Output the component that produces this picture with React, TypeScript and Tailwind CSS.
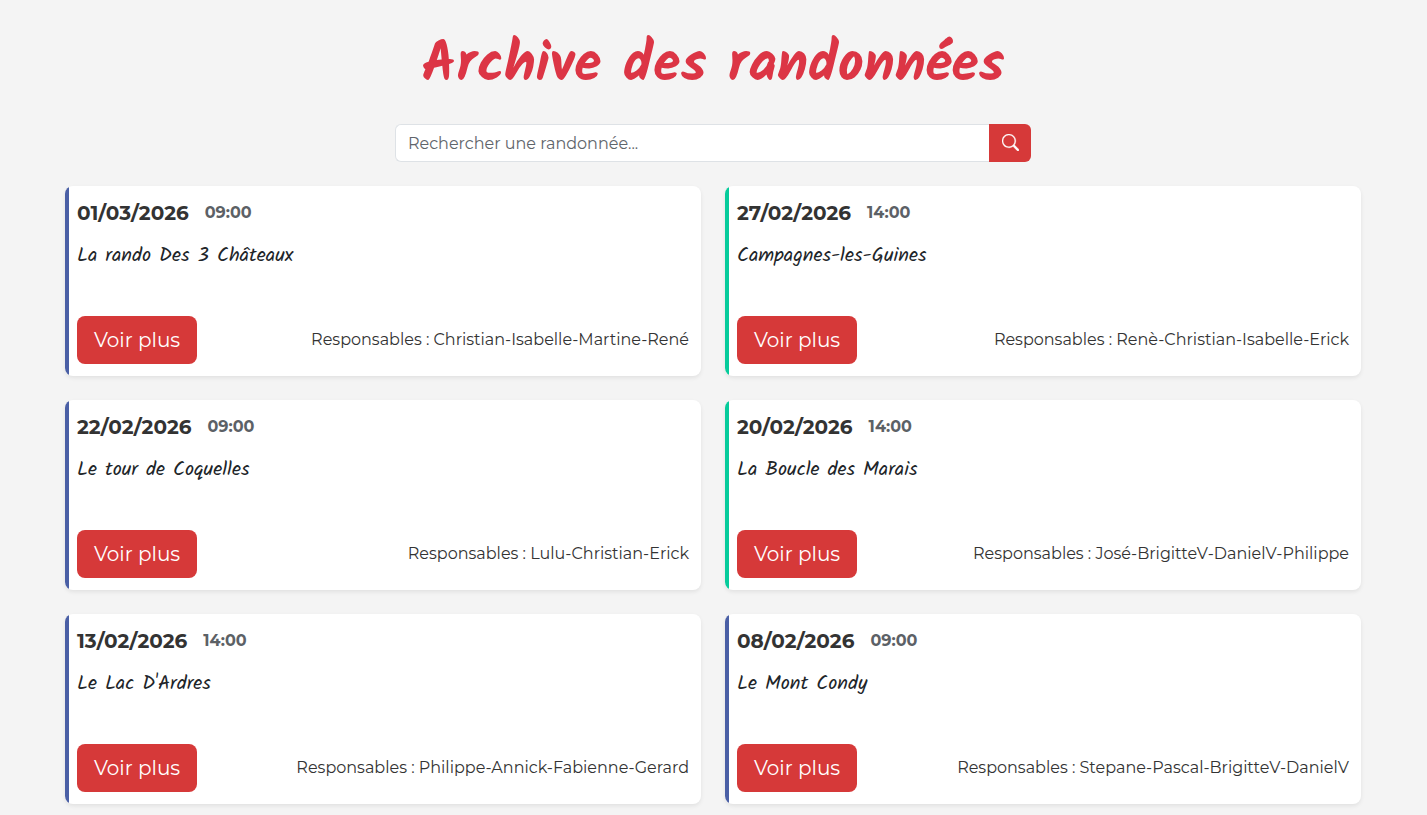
import React, { useState } from 'react';
import { BsSearch } from 'react-icons/bs';

interface Rando {
    date: string;
    heure: string;
    titre: string;
    responsables: string;
    couleur: 'bleu' | 'vert';
}

const randos: Rando[] = [
    { date: '01/03/2026', heure: '09:00', titre: 'La rando Des 3 Châteaux', responsables: 'Christian-Isabelle-Martine-René', couleur: 'bleu' },
    { date: '27/02/2026', heure: '14:00', titre: 'Campagnes-les-Guines', responsables: 'Renè-Christian-Isabelle-Erick', couleur: 'vert' },
    { date: '22/02/2026', heure: '09:00', titre: 'Le tour de Coquelles', responsables: 'Lulu-Christian-Erick', couleur: 'bleu' },
    { date: '20/02/2026', heure: '14:00', titre: 'La Boucle des Marais', responsables: 'José-BrigitteV-DanielV-Philippe', couleur: 'vert' },
    { date: '13/02/2026', heure: '14:00', titre: "Le Lac D'Ardres", responsables: 'Philippe-Annick-Fabienne-Gerard', couleur: 'bleu' },
    { date: '08/02/2026', heure: '09:00', titre: 'Le Mont Condy', responsables: 'Stepane-Pascal-BrigitteV-DanielV', couleur: 'bleu' },
];

const couleurs = {
    bleu: 'bg-[#4a5fa5]',
    vert: 'bg-[#06cb9b]',
};

const RandoCard: React.FC<{ rando: Rando }> = ({ rando }) => (
    <article className="flex overflow-hidden rounded-lg bg-white shadow-[0_2px_4px_rgba(0,0,0,0.08)]">
        <div className={`w-1 shrink-0 ${couleurs[rando.couleur]}`} />
        <div className="flex min-w-0 flex-1 flex-col py-3 pr-3 pl-2">
            <div className="flex items-center gap-4 leading-[30px] font-bold">
                <span className="text-xl leading-[30px] text-[#333333]">{rando.date}</span>
                <span className="text-base leading-[30px] text-[#5c6166]">{rando.heure}</span>
            </div>
            <h2 className="mt-3 font-['Kalam','Open_Sans',cursive] text-xl leading-8 text-[#212529]">{rando.titre}</h2>
            <div className="mt-auto flex items-center justify-between gap-4 pt-11">
                <button type="button" className="h-12 w-[120px] shrink-0 rounded-lg bg-[#d63939] text-xl text-white hover:bg-[#bd2d2d]">
                    Voir plus
                </button>
                <p className="text-right text-base text-[#333333]">Responsables : {rando.responsables}</p>
            </div>
        </div>
    </article>
);

const App: React.FC = () => {
    const [recherche, setRecherche] = useState('');

    const resultats = randos.filter((r) => r.titre.toLowerCase().includes(recherche.toLowerCase()));

    return (
        <main className="min-h-screen bg-[#f4f4f4] font-['Montserrat','Inter',sans-serif]">
            <div className="mx-auto max-w-[1321px] pt-9 pr-[13px] pl-3">
                <h1 className="text-center font-['Kalam','Open_Sans',cursive] text-[56px] leading-[60px] font-bold text-[#dc3545]">
                    Archive des randonnées
                </h1>

                <form className="mx-auto mt-7 flex w-full max-w-[636px]" onSubmit={(e) => e.preventDefault()}>
                    <input
                        type="text"
                        aria-label="Rechercher une randonnée"
                        placeholder="Rechercher une randonnée..."
                        className="h-[38px] min-w-0 flex-1 rounded-l-md border border-r-0 border-[#dee2e6] bg-white px-3 text-base text-[#212529] outline-none placeholder:text-[#5f656b]"
                        value={recherche}
                        onChange={(e) => setRecherche(e.target.value)}
                    />
                    <button
                        type="submit"
                        aria-label="Rechercher"
                        className="flex h-[38px] w-[42px] items-center justify-center rounded-r-md bg-[#d63939] pb-0.5 text-white hover:bg-[#bd2d2d]"
                    >
                        <BsSearch className="size-[17px]" strokeWidth={0.3} />
                    </button>
                </form>

                <div className="mt-6 grid grid-cols-1 gap-6 lg:grid-cols-2">
                    {resultats.map((rando) => (
                        <RandoCard key={rando.date} rando={rando} />
                    ))}
                </div>
            </div>
        </main>
    );
};

export default App;
